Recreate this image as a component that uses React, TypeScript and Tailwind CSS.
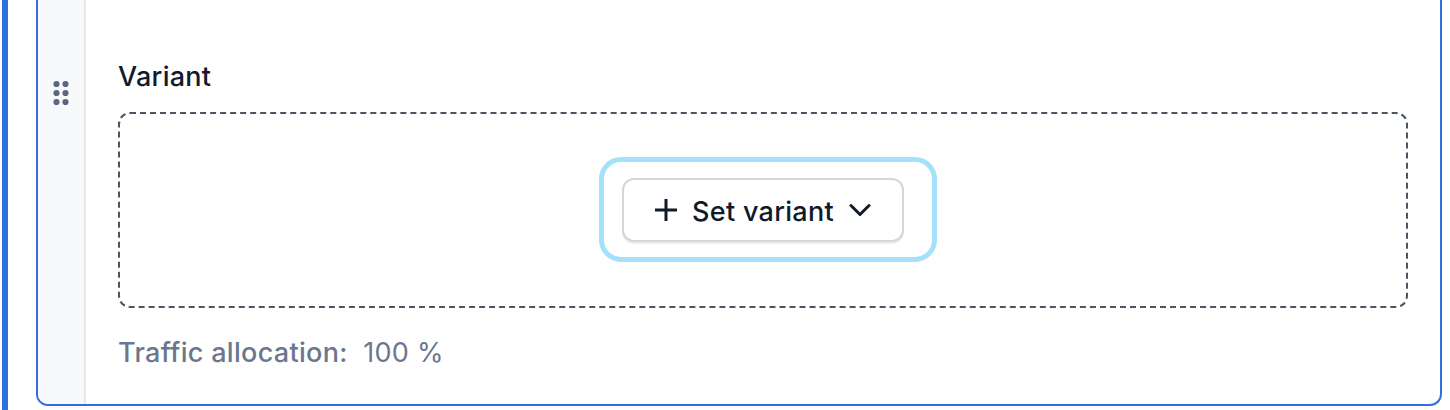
import React from 'react';

const dotRows = [4, 13, 22];

function DragHandle() {
    return (
        <svg className="h-[26px] w-[18px]" viewBox="0 0 18 26" fill="#5d6880">
            {dotRows.map((y) => (
                <React.Fragment key={y}>
                    <circle cx="4.5" cy={y} r="3.1" />
                    <circle cx="13.5" cy={y} r="3.1" />
                </React.Fragment>
            ))}
        </svg>
    );
}

function SetVariantButton() {
    return (
        <div className="relative">
            <button className="flex h-16 w-[282px] items-center rounded-xl border-2 border-[#d0d7dd] bg-white pl-[31px] shadow-[0_2px_0_rgba(31,35,40,0.07)]">
                <svg className="h-[22px] w-[22px] shrink-0" viewBox="0 0 22 22" fill="none" stroke="#111a2b" strokeWidth="3">
                    <path d="M11 0v22M0 11h22" />
                </svg>
                <span className="ml-[15px] w-[142px] whitespace-nowrap pt-1 text-[27px] leading-9 font-medium tracking-[0.3px]">Set variant</span>
                <svg className="ml-[15px] h-[14px] w-[22px] shrink-0" viewBox="0 0 22 14" fill="none" stroke="#111a2b" strokeWidth="3" strokeLinecap="round" strokeLinejoin="round">
                    <path d="M2 2.5l9 9 9-9" />
                </svg>
            </button>
            <div className="pointer-events-none absolute -top-[21px] -right-[33px] -bottom-5 -left-[23px] rounded-[22px] border-5 border-[#a4e1fa]" />
        </div>
    );
}

export default function App() {
    return (
        <div className="flex h-[410px] w-[1450px] overflow-hidden bg-white pl-0.5 font-['Inter',sans-serif] text-[#111a2b]">
            <div className="w-1.5 shrink-0 bg-[#316fde]" />
            <div className="ml-7 flex h-[406px] w-[1406px] overflow-hidden rounded-b-xl border-2 border-t-0 border-[#316fde]">
                <div className="flex w-12 shrink-0 justify-center border-r-2 border-[#e5e8eb] bg-[#f7f9fb] pt-20">
                    <DragHandle />
                </div>
                <div className="flex-1 px-8 pt-[59px]">
                    <h2 className="text-[27px] leading-9 font-medium tracking-[0.28px]">Variant</h2>
                    <div className="mt-[17px] flex h-[196px] items-center justify-center rounded-xl border-2 border-dashed border-[#4b5563]">
                        <SetVariantButton />
                    </div>
                    <div className="mt-[27px] flex gap-[15.5px] text-[27px] leading-9 tracking-[0.3px] text-[#6b768f]">
                        <span className="font-medium">Traffic allocation:</span>
                        <span>100 %</span>
                    </div>
                </div>
            </div>
        </div>
    );
}
